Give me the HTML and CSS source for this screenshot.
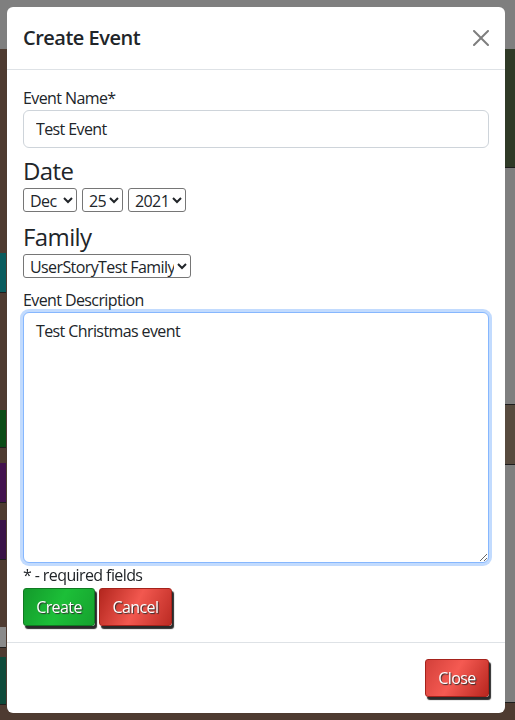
FILE: index.html
```html
<!DOCTYPE html>
<html lang="en">
<head>
<meta charset="utf-8">
<title>Create Event</title>
<link rel="stylesheet" href="styles.css">
</head>
<body>
<div class="page">
  <div class="topbar"></div>
  <div class="main">
    <div class="left-strip">
      <div class="blk blk-teal"></div>
      <div class="blk blk-green"></div>
      <div class="blk blk-purple"></div>
      <div class="blk blk-purple2"></div>
      <div class="blk blk-gray"></div>
      <div class="blk blk-teal2"></div>
    </div>
    <div class="center"></div>
    <div class="right-strip">
      <div class="rs rs-green"></div>
      <div class="rs rs-gray1"></div>
      <div class="rs rs-brown"></div>
      <div class="rs rs-gray2"></div>
    </div>
  </div>
</div>

<div class="modal">
  <div class="modal-header">
    <h5 class="modal-title">Create Event</h5>
    <button class="btn-close" type="button" aria-label="Close">
      <svg viewBox="0 0 16 16" width="16" height="16"><path d="M.293.293a1 1 0 011.414 0L8 6.586 14.293.293a1 1 0 111.414 1.414L9.414 8l6.293 6.293a1 1 0 01-1.414 1.414L8 9.414l-6.293 6.293a1 1 0 01-1.414-1.414L6.586 8 .293 1.707a1 1 0 010-1.414z"/></svg>
    </button>
  </div>
  <div class="modal-body">
    <label class="lbl">Event Name*</label>
    <input class="form-control" type="text" value="Test Event">
    <div class="section-title sec-date">Date</div>
    <div class="selects">
      <select class="sel sel-month"><option>Jan</option><option>Feb</option><option>Mar</option><option>Apr</option><option>May</option><option>Jun</option><option>Jul</option><option>Aug</option><option>Sep</option><option>Oct</option><option>Nov</option><option selected>Dec</option></select>
      <select class="sel sel-day"><option>24</option><option selected>25</option><option>26</option></select>
      <select class="sel sel-year"><option>2020</option><option selected>2021</option><option>2022</option></select>
    </div>
    <div class="section-title sec-family">Family</div>
    <div class="selects">
      <select class="sel sel-family"><option selected>UserStoryTest Family</option></select>
    </div>
    <label class="lbl lbl-desc">Event Description</label>
    <textarea class="form-control textarea is-focused">Test Christmas event</textarea>
    <div class="req">* - required fields</div>
    <div class="btns">
      <button class="btn btn-green" type="button">Create</button>
      <button class="btn btn-red" type="button">Cancel</button>
    </div>
  </div>
  <div class="modal-footer">
    <button class="btn btn-close-red" type="button">Close</button>
  </div>
</div>
</body>
</html>
```

FILE: styles.css
```css
* { box-sizing: border-box; }

html, body {
  margin: 0;
  height: 100%;
}

body {
  font-family: "Open Sans", "Noto Sans", sans-serif;
  font-size: 16px;
  line-height: 1.5;
  color: #212529;
  background: #4e3b31;
  overflow: hidden;
}

/* darkened page behind the backdrop */
.page {
  height: 720px;
  display: flex;
  flex-direction: column;
}

.topbar {
  height: 49px;
  background: #7f7f7f;
  flex: none;
}

.main {
  flex: 1;
  display: flex;
  background: #4e3b31;
}

.left-strip {
  width: 7px;
  display: flex;
  flex-direction: column;
}

.blk { width: 6px; border-bottom: 1px solid #1e1e1e; }
.blk-teal    { margin-top: 204px; height: 40px; background: #0a5c5e; }
.blk-green   { margin-top: 117px; height: 38px; background: #0c4c16; }
.blk-purple  { margin-top: 15px;  height: 40px; background: #43124e; }
.blk-purple2 { margin-top: 17px;  height: 40px; background: #3a1248; }
.blk-gray    { margin-top: 67px;  height: 21px; background: #8a8a8a; }
.blk-teal2   { margin-top: 9px;   height: 48px; background: #0e4a3a; }

.center { flex: 1; }

.right-strip {
  width: 10px;
  display: flex;
  flex-direction: column;
}

.rs { border-bottom: 1px solid #1c1c1c; }
.rs-green { height: 119px; background: #2f3a27; }
.rs-gray1 { height: 237px; background: #7f7f7f; }
.rs-brown { height: 60px;  background: #574a3e; }
.rs-gray2 { height: 238px; background: #7f7f7f; }

/* modal */
.modal {
  position: fixed;
  top: 7px;
  left: 7px;
  width: 498px;
  background: #fff;
  border-radius: 6px;
  display: flex;
  flex-direction: column;
}

.modal-header {
  display: flex;
  align-items: center;
  padding: 16px;
  border-bottom: 1px solid #dee2e6;
}

.modal-title {
  margin: 0;
  font-size: 20px;
  font-weight: 600;
  line-height: 30px;
  letter-spacing: -0.5px;
}

.btn-close {
  margin: -8px -8px -8px auto;
  padding: 8px;
  border: 0;
  background: transparent;
  width: 32px;
  height: 32px;
  display: flex;
  align-items: center;
  justify-content: center;
  opacity: 0.5;
}

.btn-close svg { display: block; fill: #000; }

.modal-body {
  padding: 16px;
  display: flex;
  flex-direction: column;
  align-items: flex-start;
}

.lbl {
  display: block;
  line-height: 24px;
  letter-spacing: -0.6px;
}

.lbl-desc { margin-top: 10px; }

.form-control {
  display: block;
  width: 100%;
  padding: 6px 12px;
  font-family: inherit;
  font-size: 16px;
  line-height: 24px;
  color: #212529;
  background: #fff;
  border: 1px solid #ced4da;
  border-radius: 6px;
  letter-spacing: -0.6px;
  height: 38px;
}

.textarea {
  height: 251px;
  resize: vertical;
}

.is-focused {
  border-color: #86b7fe;
  box-shadow: 0 0 0 3px rgba(13, 110, 253, 0.25);
  outline: 0;
}

.section-title {
  font-size: 24px;
  line-height: 34px;
  letter-spacing: -0.6px;
}

.sec-date   { margin-top: 6px; }
.sec-family { margin-top: 7px; line-height: 35px; }

.selects {
  display: flex;
  gap: 5px;
}

.sel {
  font-family: inherit;
  font-size: 16px;
  height: 24px;
  color: #212529;
  border: 1px solid #767676;
  border-radius: 3px;
  background: #fff;
  padding: 0 0 0 2px;
  letter-spacing: -0.6px;
}

.sel-month  { width: 54px; }
.sel-day    { width: 41px; }
.sel-year   { width: 58px; }
.sel-family { width: 168px; }

.req {
  line-height: 24px;
  letter-spacing: -0.6px;
}

.btns {
  display: flex;
  gap: 4px;
  margin-top: 1px;
}

.btn {
  font-family: inherit;
  font-size: 16px;
  line-height: 24px;
  padding: 6px 11px;
  height: 38px;
  color: #fff;
  border-radius: 3px;
  text-shadow: 1px 1px 1px #333;
  box-shadow: 2px 3px 1px #2a2a2a;
  letter-spacing: -0.6px;
}

.btn-green {
  width: 72px;
  border: 1px solid #107a22;
  background: linear-gradient(115deg, #139a2b 0%, #1cbf38 50%, #16a22f 100%);
}

.btn-red {
  width: 73px;
  border: 1px solid #a5221b;
  background: linear-gradient(115deg, #b3261e 0%, #f2584f 50%, #bc2b24 100%);
}

.modal-footer {
  border-top: 1px solid #dee2e6;
  padding: 16px;
  display: flex;
  justify-content: flex-end;
}

.btn-close-red {
  width: 64px;
  border: 1px solid #a5221b;
  background: linear-gradient(120deg, #d3403a 0%, #f55a52 45%, #b8261f 100%);
}
```
